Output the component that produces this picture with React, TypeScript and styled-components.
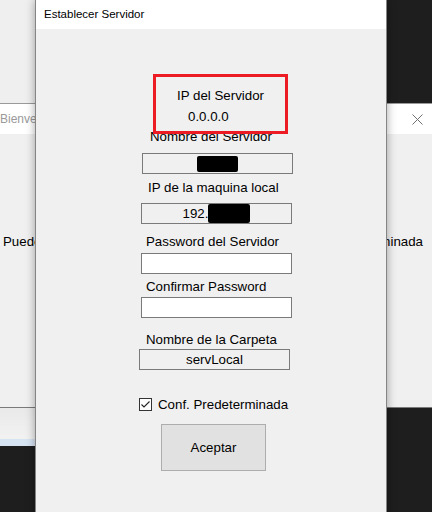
import React from "react";
import styled, { createGlobalStyle } from "styled-components";

const Global = createGlobalStyle`
  html, body { margin: 0; padding: 0; background: #1e1e1e; overflow: hidden; }
  body { font-family: "Liberation Sans", Arial, sans-serif; color: #000; }
  * { box-sizing: border-box; }
`;

const Desktop = styled.div`
  position: relative;
  width: 432px;
  height: 512px;
  overflow: hidden;
  background: #1e1e1e;
`;

const BackPane = styled.div`
  position: absolute;
  left: 0;
  top: 0;
  width: 80px;
  height: 103px;
  background: #efefef;
`;

const WelcomeWindow = styled.div`
  position: absolute;
  left: -6px;
  top: 103px;
  width: 438px;
  height: 305px;
  background: #f0f0f0;
  border-top: 1px solid #9a9a9a;
  border-bottom: 1px solid #7a7a7a;
  display: flex;
  flex-direction: column;
`;

const WelcomeTitle = styled.div`
  height: 30px;
  background: #fff;
  display: flex;
  align-items: center;
  justify-content: space-between;
  padding: 0 9px 0 6px;
  font-size: 12px;
  color: #9a9a9a;
`;

const WelcomeBody = styled.div`
  display: flex;
  justify-content: space-between;
  padding: 100px 9px 0 9px;
  font-size: 13.3px;
  line-height: 15px;
`;

const BottomStrip = styled.div`
  position: absolute;
  left: 0;
  top: 408px;
  width: 200px;
  height: 38px;
  background: linear-gradient(#e9e9e9, #f2f2f2);
  border-bottom: 7px solid #d7e4f2;
`;

const Dialog = styled.div`
  position: absolute;
  left: 35px;
  top: 0;
  width: 352px;
  height: 530px;
  background: #f0f0f0;
  border-left: 1px solid #858585;
  border-right: 1px solid #858585;
  box-shadow: 0 0 9px rgba(0, 0, 0, 0.35);
  display: flex;
  flex-direction: column;
`;

const DialogTitle = styled.div`
  height: 29px;
  background: #fff;
  display: flex;
  align-items: center;
  padding-left: 8px;
  font-size: 11.5px;
  padding-bottom: 1px;
`;

const DialogBody = styled.div`
  position: relative;
  display: flex;
  flex-direction: column;
  align-items: flex-start;
  padding-top: 59px;
  font-size: 13.3px;
`;

const Label = styled.div<{ $x: number; $top: number }>`
  margin-left: ${(p) => p.$x}px;
  margin-top: ${(p) => p.$top}px;
  height: 15px;
  line-height: 15px;
  white-space: nowrap;
`;

const Field = styled.div<{ $x: number; $top: number; $readOnly?: boolean }>`
  margin-left: ${(p) => p.$x}px;
  margin-top: ${(p) => p.$top}px;
  width: 151px;
  height: 21px;
  border: 1px solid #7a7a7a;
  background: ${(p) => (p.$readOnly ? "#f0f0f0" : "#ffffff")};
  display: flex;
  align-items: center;
  justify-content: center;
  line-height: 15px;
  white-space: nowrap;
`;

const Redaction = styled.span<{ $w: number; $h: number }>`
  display: inline-block;
  width: ${(p) => p.$w}px;
  height: ${(p) => p.$h}px;
  background: #000;
  border-radius: 2px;
`;

const Highlight = styled.div`
  position: absolute;
  left: 117px;
  top: 45px;
  width: 135px;
  height: 60px;
  border: 3px solid #ed1c24;
`;

const CheckRow = styled.div<{ $x: number; $top: number }>`
  margin-left: ${(p) => p.$x}px;
  margin-top: ${(p) => p.$top}px;
  display: flex;
  align-items: center;
  gap: 6px;
  height: 15px;
  line-height: 15px;
`;

const CheckBox = styled.span`
  width: 13px;
  height: 13px;
  border: 1px solid #333;
  background: #fff;
  display: flex;
  align-items: center;
  justify-content: center;
`;

const Button = styled.div<{ $x: number; $top: number }>`
  margin-left: ${(p) => p.$x}px;
  margin-top: ${(p) => p.$top}px;
  width: 105px;
  height: 47px;
  background: #e1e1e1;
  border: 1px solid #adadad;
  display: flex;
  align-items: center;
  justify-content: center;
`;

export default function App() {
  return (
    <Desktop>
      <Global />
      <BackPane />
      <WelcomeWindow>
        <WelcomeTitle>
          <span>Bienvenido</span>
          <svg width="11" height="11" viewBox="0 0 11 11">
            <path d="M0.5 0.5 L10.5 10.5 M10.5 0.5 L0.5 10.5" stroke="#707070" strokeWidth="1" />
          </svg>
        </WelcomeTitle>
        <WelcomeBody>
          <span>Puede</span>
          <span>Predeterminada</span>
        </WelcomeBody>
      </WelcomeWindow>
      <BottomStrip />
      <Dialog>
        <DialogTitle>Establecer Servidor</DialogTitle>
        <DialogBody>
          <Label $x={141} $top={0}>IP del Servidor</Label>
          <Label $x={152} $top={6}>0.0.0.0</Label>
          <Label $x={114} $top={5}>Nombre del Servidor</Label>
          <Field $x={106} $top={9} $readOnly>
            <Redaction $w={41} $h={16} />
          </Field>
          <Label $x={112} $top={6}>IP de la maquina local</Label>
          <Field $x={105} $top={8} $readOnly>
            <span>192.</span>
            <Redaction $w={42} $h={19} />
          </Field>
          <Label $x={110} $top={10}>Password del Servidor</Label>
          <Field $x={105} $top={4} />
          <Label $x={110} $top={5}>Confirmar Password</Label>
          <Field $x={105} $top={3} />
          <Label $x={110} $top={14}>Nombre de la Carpeta</Label>
          <Field $x={103} $top={2} $readOnly>servLocal</Field>
          <CheckRow $x={103} $top={27}>
            <CheckBox>
              <svg width="11" height="11" viewBox="0 0 11 11">
                <path d="M1.5 5.5 L4 8 L9.5 2.5" fill="none" stroke="#222" strokeWidth="1.1" />
              </svg>
            </CheckBox>
            <span>Conf. Predeterminada</span>
          </CheckRow>
          <Button $x={125} $top={12}>Aceptar</Button>
          <Highlight />
        </DialogBody>
      </Dialog>
    </Desktop>
  );
}
